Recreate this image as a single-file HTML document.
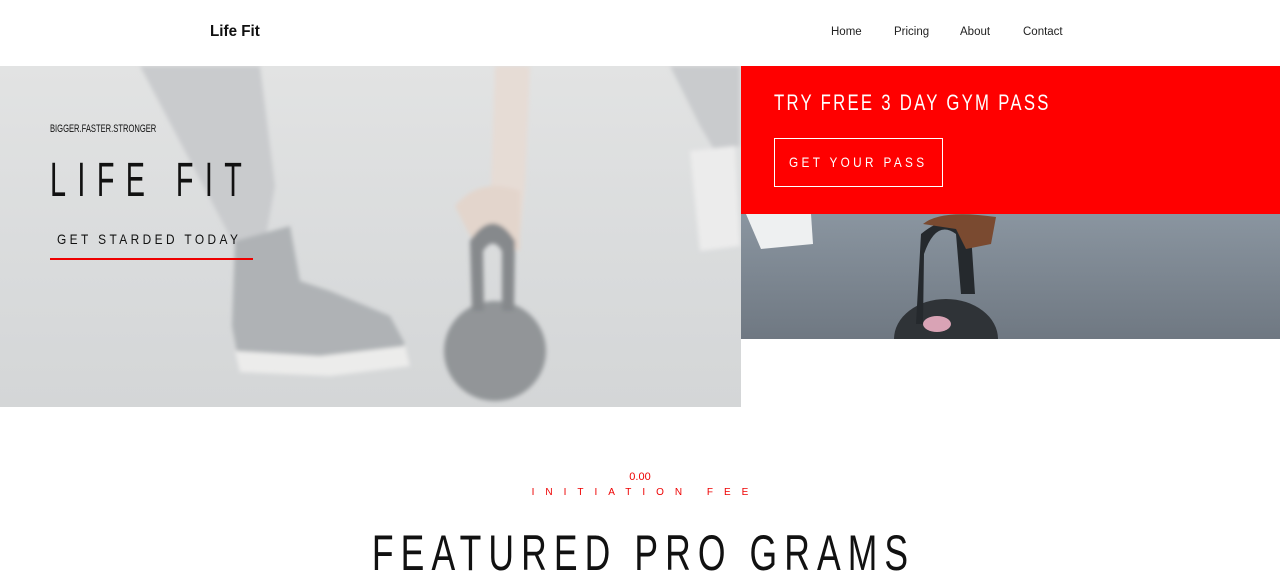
<!DOCTYPE html>
<html><head><style>
*{margin:0;padding:0;box-sizing:border-box}
body{width:1280px;height:569px;overflow:hidden;background:#fff;font-family:"Liberation Sans",sans-serif;position:relative}
.a{position:absolute}
.n{font-family:"Liberation Sans",sans-serif}
</style></head><body>
<div class="a" style="left:210px;top:23px;font-size:16px;font-weight:bold;color:#111;transform:scaleX(.95);transform-origin:left">Life Fit</div>
<div class="a" style="left:831px;top:26px;font-size:11.5px;color:#222">Home</div>
<div class="a" style="left:894px;top:26px;font-size:11.5px;color:#222">Pricing</div>
<div class="a" style="left:960px;top:26px;font-size:11.5px;color:#222">About</div>
<div class="a" style="left:1023px;top:26px;font-size:11.5px;color:#222">Contact</div>

<div class="a" style="left:0;top:66px;width:741px;height:341px;background:linear-gradient(180deg,#e2e3e3,#d9dbdc 60%,#d4d6d7);overflow:hidden">
 <svg class="a" style="left:0;top:0" width="741" height="341">
  <defs><filter id="b"><feGaussianBlur stdDeviation="2"/></filter></defs>
  <g filter="url(#b)">
  <path d="M140 0 L260 0 L275 120 L265 175 L235 180 Z" fill="#c9cbcd"/>
  <path d="M235 175 L290 160 L300 215 L330 225 L390 250 L405 278 L390 292 L320 300 L240 302 L232 260 Z" fill="#afb2b5"/>
  <path d="M235 285 L320 290 L405 280 L410 300 L330 310 L240 306 Z" fill="#ececeb"/>
  <path d="M495 0 L530 0 L525 120 L520 170 L490 150 Z" fill="#e6dcd5"/>
  <path d="M455 140 Q480 110 520 125 L520 185 L470 170 Z" fill="#e3d5cc"/>
  <ellipse cx="495" cy="285" rx="51" ry="50" fill="#929598"/>
  <path d="M472 245 L470 175 Q493 140 515 175 L514 245 L502 245 L502 185 Q493 170 483 185 L484 245 Z" fill="#86898c"/>
  <path d="M670 0 L740 0 L740 80 L715 85 L700 60 Z" fill="#c9cbcd"/>
  <path d="M690 85 L735 80 L740 180 L700 185 Z" fill="#ececec"/>
  </g>
 </svg>
 <div class="a n" style="left:50px;top:57px;font-size:11px;color:#111;transform:scaleX(.69);transform-origin:left;white-space:nowrap">BIGGER.FASTER.STRONGER</div>
 <div class="a n" style="left:50px;top:87px;font-size:48px;color:#111;letter-spacing:19px;white-space:nowrap;transform:scaleX(.6);transform-origin:left">LIFE FIT</div>
 <div class="a n" style="left:57px;top:165px;font-size:14px;color:#111;letter-spacing:4px;white-space:nowrap;transform:scaleX(.85);transform-origin:left">GET STARDED TODAY</div>
 <div class="a" style="left:50px;top:192px;width:203px;height:1.5px;background:#e00"></div>
</div>

<div class="a" style="left:741px;top:66px;width:539px;height:148px;background:#f00">
 <div class="a n" style="left:33px;top:24px;font-size:22px;color:#fff;letter-spacing:3px;white-space:nowrap;transform:scaleX(.76);transform-origin:left">TRY FREE 3 DAY GYM PASS</div>
 <div class="a" style="left:33px;top:72px;width:169px;height:49px;border:1px solid #fff"></div>
 <div class="a n" style="left:48px;top:88px;font-size:14px;color:#fff;letter-spacing:4px;white-space:nowrap;transform:scaleX(.84);transform-origin:left">GET YOUR PASS</div>
</div>
<div class="a" style="left:741px;top:214px;width:539px;height:125px;background:linear-gradient(180deg,#8a95a0,#6f7882);overflow:hidden">
 <svg class="a" width="539" height="125">
  <path d="M5 0 L70 0 L72 30 L20 35 Z" fill="#eef0f1"/>
  <ellipse cx="205" cy="125" rx="52" ry="40" fill="#2f3337"/>
  <path d="M182 110 L183 40 Q195 5 215 20 L220 80 L234 80 L230 20 Q210 -5 180 20 L175 110 Z" fill="#25292d"/>
  <ellipse cx="196" cy="110" rx="14" ry="8" fill="#d9a3b5"/>
  <path d="M182 10 Q200 -5 255 3 L250 30 L225 35 L215 15 Z" fill="#7a4a30"/>
 </svg>
</div>

<div class="a" style="left:0;top:471px;width:1280px;text-align:center;font-size:11px;color:#e00">0.00</div>
<div class="a n" style="left:0;top:487px;width:1280px;text-align:center;font-size:10px;color:#e00;letter-spacing:11px;padding-left:11px">INITIATION FEE</div>
<div class="a n" style="left:0;top:524px;width:1280px;text-align:center;font-size:50px;color:#111;letter-spacing:10px;padding-left:10px;transform:scaleX(.71)">FEATURED PRO GRAMS</div>
</body></html>
